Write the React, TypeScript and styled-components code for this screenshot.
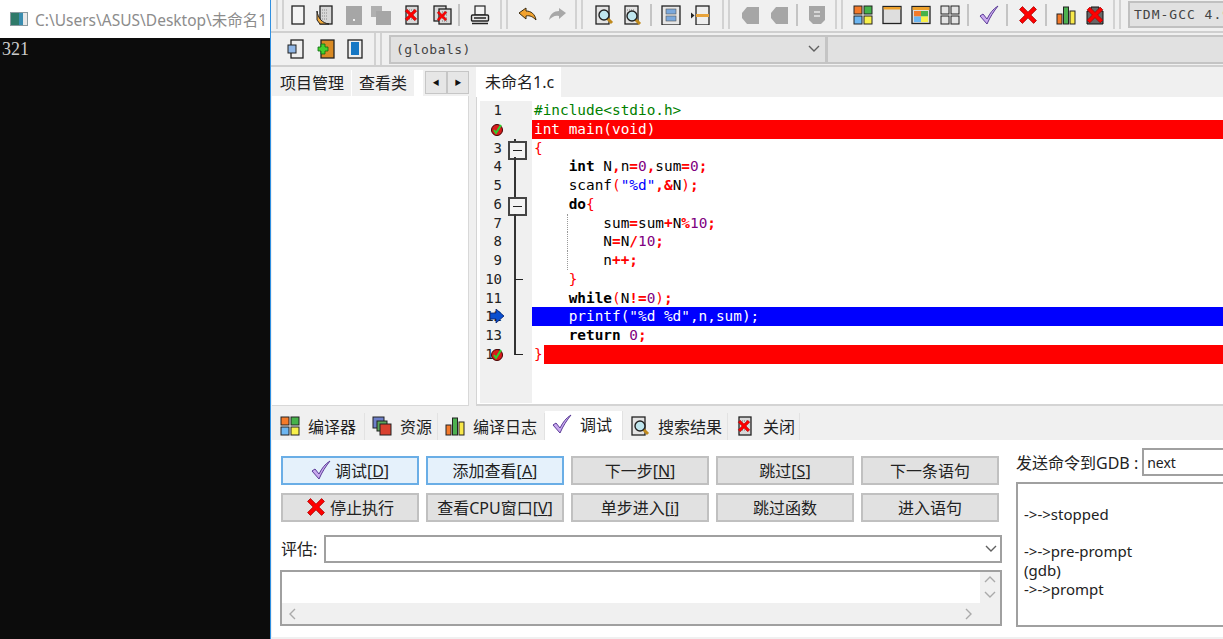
import React from 'react';
import styled, { createGlobalStyle, css } from 'styled-components';

const UI_FONT = `"Noto Sans", "Noto Sans CJK SC", sans-serif`;

const GlobalStyle = createGlobalStyle`
    html, body {
        margin: 0;
        padding: 0;
        background: #f0f0f0;
    }
    * {
        box-sizing: border-box;
    }
`;

/* ---------- icons ---------- */

const DOTS = 'M7 5h6M7 8h6M7 11h6M7 14h6';

function Doc({ x = 4, y = 1, w = 12, h = 18, fill = '#f4f4f4' }) {
    return <rect x={x} y={y} width={w} height={h} fill={fill} stroke="#222" strokeWidth="1.3" />;
}

function RedX({ x = 10, y = 10, s = 1 }: { x?: number; y?: number; s?: number }) {
    return (
        <g transform={`translate(${x} ${y}) scale(${s})`}>
            <path d="M-6 -4 -4 -6 0 -2 4 -6 6 -4 2 0 6 4 4 6 0 2 -4 6 -6 4 -2 0Z" fill="#f00" stroke="#a00" strokeWidth=".6" />
        </g>
    );
}

function Lens({ x = 12, y = 12 }) {
    return (
        <g>
            <path d={`M${x + 3} ${y + 3}l5 5`} stroke="#c08a1e" strokeWidth="3" />
            <circle cx={x} cy={y} r="5" fill="#bfe6ee" stroke="#222" strokeWidth="1.4" />
        </g>
    );
}

const ICONS: Record<string, React.ReactNode> = {
    new: <Doc />,
    open: (
        <>
            <Doc x={5} fill="#d8d8d8" />
            <path d={DOTS} stroke="#888" strokeDasharray="1 1" />
            <path d="M2 6C3 13 7 18 14 19H5L2 15Z" fill="#f0a93c" stroke="#222" />
        </>
    ),
    save: <path d="M2 1H18V20H2Z M9 14h2v2H9Z" fill="#a6a6a6" fillRule="evenodd" />,
    saveAll: (
        <>
            <path d="M0 1H11V12H0Z" fill="#b0b0b0" />
            <path d="M5 6H20V20H5Z" fill="#a6a6a6" />
        </>
    ),
    close: (
        <>
            <Doc fill="#d8d8d8" />
            <path d={DOTS} stroke="#777" strokeDasharray="1 1" />
            <RedX x={9} y={10} s={0.95} />
        </>
    ),
    closeAll: (
        <>
            <Doc x={2} y={1} w={12} h={15} fill="#d8d8d8" />
            <Doc x={7} y={4} w={12} h={15} fill="#d8d8d8" />
            <path d="M10 7h6M10 10h6M10 13h6M10 16h6" stroke="#777" strokeDasharray="1 1" />
            <RedX x={10} y={11} s={0.8} />
        </>
    ),
    print: (
        <>
            <rect x="5" y="1" width="10" height="9" fill="#f4f4f4" stroke="#222" strokeWidth="1.2" />
            <rect x="1.5" y="10" width="17" height="6" rx="1" fill="#e8e8e8" stroke="#222" strokeWidth="1.4" />
            <path d="M2 18.5H18M4 13h12" stroke="#222" strokeWidth="1.4" />
        </>
    ),
    undo: <path d="M1 8 8 3V6C13 6 17 9 18 15 15 12 12 10 8 11V14Z" fill="#f2a22d" stroke="#3a2b10" strokeWidth="1" />,
    redo: <path d="M19 8 12 3V6C7 6 3 9 2 15 5 12 8 10 12 11V14Z" fill="#a8a8a8" />,
    find: (
        <>
            <Doc x={2} y={1} w={13} h={18} fill="#e4e4e4" />
            <Lens x={10} y={10} />
        </>
    ),
    replace: (
        <>
            <Doc x={3} y={1} w={13} h={18} fill="#e4e4e4" />
            <path d="M5 5h8M5 8h8" stroke="#777" strokeDasharray="1 1" />
            <Lens x={10} y={11} />
        </>
    ),
    mode: (
        <>
            <rect x="1" y="1" width="18" height="19" fill="#e6e6e6" stroke="#222" strokeWidth="1.3" />
            <rect x="5" y="4" width="10" height="5" fill="#7aa8dc" stroke="#555" strokeWidth=".6" />
            <rect x="5" y="11" width="10" height="5" fill="#7aa8dc" stroke="#555" strokeWidth=".6" />
        </>
    ),
    insert: (
        <>
            <rect x="6" y="1" width="13" height="19" fill="#eee" stroke="#222" strokeWidth="1.3" />
            <rect x="6" y="9" width="13" height="3" fill="#e8a33a" />
            <path d="M1 7.5 4.5 10.5 1 13.5Z" fill="#222" />
        </>
    ),
    grayLeft: <path d="M6 2H18V19H6L1 13V8Z" fill="#a6a6a6" />,
    grayShield: (
        <>
            <path d="M2 1H18V15L14 19H6L2 15Z" fill="#a6a6a6" />
            <path d="M7 7h6M7 11h6" stroke="#e8e8e8" strokeWidth="1.4" />
        </>
    ),
    compile: (
        <>
            <rect x="1" y="1" width="8" height="8" fill="#f47a2a" stroke="#222" />
            <rect x="11" y="1" width="8" height="8" fill="#46b24a" stroke="#222" />
            <rect x="1" y="11" width="8" height="8" fill="#6cb6f2" stroke="#222" />
            <rect x="11" y="11" width="8" height="8" fill="#f8f04a" stroke="#222" />
        </>
    ),
    run: (
        <>
            <rect x="1" y="1.5" width="18" height="17" fill="#dedede" stroke="#222" strokeWidth="1.3" />
            <rect x="1.6" y="2" width="16.8" height="2.5" fill="#eda12c" />
        </>
    ),
    compileRun: (
        <>
            <rect x="1" y="1.5" width="18" height="17" fill="#ddd" stroke="#222" strokeWidth="1.3" />
            <rect x="1.6" y="2" width="16.8" height="3" fill="#eda12c" />
            <rect x="3" y="6" width="7" height="5.5" fill="#f47a2a" />
            <rect x="10" y="6" width="7" height="5.5" fill="#46b24a" />
            <rect x="3" y="11.5" width="7" height="5.5" fill="#6cb6f2" />
            <rect x="10" y="11.5" width="7" height="5.5" fill="#f8f04a" />
        </>
    ),
    rebuild: (
        <>
            <rect x="1" y="1" width="8" height="8" fill="#e4e4e4" stroke="#222" />
            <rect x="11" y="1" width="8" height="8" fill="#e4e4e4" stroke="#222" />
            <rect x="1" y="11" width="8" height="8" fill="#e4e4e4" stroke="#222" />
            <rect x="11" y="11" width="8" height="8" fill="#e4e4e4" stroke="#222" />
        </>
    ),
    check: <path d="M1 11 4 9 8 14C11 8 14 4 19 1 15 6 11 12 8 19Z" fill="#c9a8ee" stroke="#5a3c96" strokeWidth="1" />,
    stop: <RedX s={1.4} />,
    chart: (
        <>
            <rect x="1" y="9" width="5" height="10" fill="#f47a2a" stroke="#222" />
            <rect x="7.5" y="2" width="5" height="17" fill="#4cb050" stroke="#222" />
            <rect x="14" y="6" width="5" height="13" fill="#f8e84a" stroke="#222" />
        </>
    ),
    profile: (
        <>
            <path d="M2 6H6V2H14V6H18V19H2Z" fill="#666" stroke="#111" />
            <RedX s={1.3} />
        </>
    ),
    addFile: (
        <>
            <rect x="5" y="1" width="12" height="18" fill="#eee" stroke="#222" strokeWidth="1.3" />
            <rect x="2" y="6" width="8" height="8" fill="#8fb6e6" stroke="#222" />
        </>
    ),
    addProject: (
        <>
            <rect x="5" y="1" width="13" height="18" fill="#d98a24" stroke="#222" strokeWidth="1.3" />
            <path d="M6 6h3V3h4v3h3v4h-3v3H9v-3H6Z" transform="translate(-4 2)" fill="#43d12e" stroke="#0d6a12" strokeWidth=".8" />
        </>
    ),
    bookmark: (
        <>
            <rect x="3" y="1" width="14" height="18" fill="#eee" stroke="#222" strokeWidth="1.3" />
            <rect x="6" y="3" width="8" height="13" fill="#1577c4" />
        </>
    ),
    resource: (
        <>
            <rect x="1" y="1" width="11" height="11" fill="#6d7fc9" stroke="#222" />
            <rect x="5" y="5" width="10" height="10" fill="#5aa45a" stroke="#222" />
            <rect x="8" y="8" width="11" height="11" fill="#d9412f" stroke="#222" />
        </>
    ),
};

const IconBox = styled.svg<{ $size: number }>`
    width: ${({ $size }) => $size}px;
    height: ${({ $size }) => $size}px;
    flex: none;
    display: block;
`;

function Icon({ name, size = 20 }: { name: string; size?: number }) {
    return (
        <IconBox $size={size} viewBox="0 0 20 20">
            {ICONS[name]}
        </IconBox>
    );
}

/* ---------- layout ---------- */

const Page = styled.div`
    display: flex;
    width: 1223px;
    height: 639px;
    overflow: hidden;
    font-family: ${UI_FONT};
    font-size: 16px;
    color: #222;
`;

const Console = styled.section`
    width: 271px;
    flex: none;
    display: flex;
    flex-direction: column;
    border-right: 1px solid #2f8fe0;
    background: #0c0c0c;
`;

const ConsoleTitle = styled.div`
    height: 38px;
    flex: none;
    display: flex;
    align-items: center;
    gap: 7px;
    padding-left: 10px;
    background: #fff;
    color: #8c8c8c;
    font-size: 15.5px;
    white-space: nowrap;
    overflow: hidden;
`;

const ConsoleGlyph = styled.div`
    width: 18px;
    height: 14px;
    flex: none;
    border: 1px solid #8a9aa0;
    background: linear-gradient(90deg, #2f7a6a 0 50%, #3a8db0 50% 78%, #e8e8e8 78%);
`;

const ConsoleText = styled.div`
    padding: 0 2px;
    font-family: 'Liberation Serif', serif;
    font-size: 18px;
    line-height: 22px;
    color: #cccccc;
`;

const Ide = styled.main`
    flex: 1;
    min-width: 0;
    display: flex;
    flex-direction: column;
    background: #f0f0f0;
`;

const ToolRow = styled.div<{ $h: number; $padBottom?: number }>`
    height: ${({ $h }) => $h}px;
    flex: none;
    display: flex;
    align-items: center;
    padding: 0 0 ${({ $padBottom }) => $padBottom ?? 0}px 5px;
    border-bottom: 2px solid #cfcfcf;
    white-space: nowrap;
`;

const Tool = styled.div<{ $ml: number }>`
    width: 20px;
    margin-left: ${({ $ml }) => $ml}px;
    flex: none;
`;

const ToolSep = styled.div<{ $ml: number }>`
    width: 2px;
    height: 22px;
    margin-left: ${({ $ml }) => $ml}px;
    flex: none;
    background: #c4c4c4;
`;

const ToolHandle = styled.div<{ $ml: number }>`
    width: 8px;
    margin-left: ${({ $ml }) => $ml}px;
    flex: none;
    align-self: stretch;
    display: flex;
    justify-content: space-between;
    &::before,
    &::after {
        content: '';
        width: 2px;
        background: #d2d2d2;
    }
`;

const monoCombo = css`
    font-family: 'DejaVu Sans Mono', monospace;
    font-size: 13px;
    color: #444;
`;

const CompilerCombo = styled.div`
    flex: none;
    width: 120px;
    height: 27px;
    margin-left: 7px;
    padding-left: 4px;
    display: flex;
    align-items: center;
    background: #e1e1e1;
    border: 2px solid #c0c0c0;
    letter-spacing: 1px;
    overflow: hidden;
    ${monoCombo}
`;

const GlobalsCombo = styled.div`
    width: 438px;
    height: 29px;
    flex: none;
    margin-left: 7px;
    padding: 0 5px 0 5px;
    display: flex;
    align-items: center;
    justify-content: space-between;
    background: #e1e1e1;
    border: 2px solid #c4c4c4;
    letter-spacing: 0.5px;
    ${monoCombo}
`;

const EmptyCombo = styled.div`
    flex: 1;
    height: 29px;
    background: #e1e1e1;
    border: 2px solid #c4c4c4;
    border-left-width: 1px;
    border-right: none;
`;

const Workspace = styled.div`
    height: 339px;
    flex: none;
    display: flex;
    padding-left: 1px;
`;

const SidePanel = styled.aside`
    width: 197px;
    flex: none;
    display: flex;
    flex-direction: column;
`;

const SideTabs = styled.div`
    height: 29px;
    flex: none;
    display: flex;
    align-items: flex-end;
    padding-left: 1px;
`;

const SideTab = styled.div`
    height: 26px;
    padding: 0 7px 2px;
    display: flex;
    align-items: center;
    border-right: 1px solid #fff;
    white-space: nowrap;
`;

const TabGap = styled.div`
    width: 8px;
    height: 26px;
    flex: none;
    background: #fff;
`;

const ArrowPair = styled.div`
    display: flex;
    align-self: center;
    margin-left: 2px;
    margin-top: 1px;
`;

const ArrowButton = styled.div`
    width: 22px;
    height: 23px;
    display: flex;
    align-items: center;
    justify-content: center;
    background: #e6e6e6;
    border: 1px solid #c6c6c6;
    font-size: 7px;
    color: #111;
`;

const SideBody = styled.div`
    flex: 1;
    background: #fff;
    border-right: 1px solid #d8d8d8;
    border-bottom: 1px solid #d8d8d8;
`;

const EditorColumn = styled.div`
    flex: 1;
    min-width: 0;
    margin-left: 7px;
    display: flex;
    flex-direction: column;
`;

const EditorTabs = styled.div`
    height: 30px;
    flex: none;
    display: flex;
`;

const EditorTab = styled.div`
    width: 85px;
    display: flex;
    align-items: center;
    padding: 0 0 2px 9px;
    background: #fff;
    white-space: nowrap;
`;

const EditorFrame = styled.div`
    flex: 1;
    display: flex;
    padding: 4px 0 1px 3px;
    background: #fff;
    border-left: 1px solid #d4d4d4;
    border-bottom: 2px solid #d4d4d4;
`;

const Gutter = styled.div`
    width: 52px;
    flex: none;
    background: #f0f0f0;
`;

const GutterRow = styled.div`
    position: relative;
    height: 18.77px;
    display: flex;
    font-family: 'DejaVu Sans Mono', monospace;
    font-size: 14px;
    line-height: 18.77px;
`;

const LineNumber = styled.div`
    width: 22px;
    flex: none;
    text-align: right;
    color: #222;
`;

const foldLine = css`
    position: absolute;
    left: 6px;
    width: 2px;
    background: #333;
    content: '';
`;

const FoldCell = styled.div<{ $kind: string }>`
    position: relative;
    width: 16px;
    margin-left: 6px;
    flex: none;
    &::before {
        ${foldLine}
        display: ${({ $kind }) => ($kind ? 'block' : 'none')};
        top: 0;
        bottom: ${({ $kind }) => ($kind === 'end' ? '9px' : '0')};
    }
    &::after {
        content: '';
        position: absolute;
        ${({ $kind }) =>
            $kind === 'box'
                ? css`
                      left: 0;
                      top: 2px;
                      width: 15px;
                      height: 15px;
                      border: 2px solid #444;
                      background: linear-gradient(#222, #222) center / 9px 1px no-repeat #f4f4f4;
                  `
                : $kind === 'tick' || $kind === 'end'
                  ? css`
                        left: 7px;
                        top: 9px;
                        width: 8px;
                        height: 1px;
                        background: #222;
                    `
                  : ''}
    }
`;

const GutterMark = styled.div`
    position: absolute;
    left: 10px;
    top: 2px;
`;

const Code = styled.div`
    flex: 1;
    min-width: 0;
    font-family: 'DejaVu Sans Mono', monospace;
    font-size: 14.4px;
    line-height: 18.77px;
    white-space: pre;
`;

const CodeLine = styled.div<{ $bg?: string; $guide?: boolean }>`
    position: relative;
    height: 18.77px;
    padding-left: 2px;
    background: ${({ $bg }) => $bg ?? 'transparent'};
    ${({ $guide }) =>
        $guide &&
        css`
            &::before {
                content: '';
                position: absolute;
                left: 35px;
                top: 0;
                bottom: 0;
                border-left: 1px dotted #999;
            }
        `}
`;

const CloseBrace = styled.span`
    display: inline-block;
    height: 100%;
    margin-left: -2px;
    padding-left: 2px;
    width: 12px;
    background: #fff;
    color: #f00;
`;

const TOKEN_STYLE: Record<string, string> = {
    p: 'color: #008000;',
    k: 'color: #000; font-weight: 700;',
    s: 'color: #f00; font-weight: 700;',
    b: 'color: #f00;',
    n: 'color: #800080;',
    q: 'color: #0000ff;',
    i: 'color: #000;',
    w: 'color: #fff;',
};

const Token = styled.span<{ $kind: string }>`
    ${({ $kind }) => TOKEN_STYLE[$kind]}
`;

const BottomTabs = styled.div`
    height: 34px;
    flex: none;
    display: flex;
    align-items: flex-end;
    padding-left: 2px;
`;

const BottomTab = styled.div<{ $active?: boolean; $w: number }>`
    width: ${({ $w }) => $w}px;
    height: ${({ $active }) => ($active ? 29 : 27)}px;
    flex: none;
    display: flex;
    align-items: center;
    gap: 8px;
    padding: 0 0 ${({ $active }) => ($active ? 4 : 1)}px 7px;
    white-space: nowrap;
    border-right: 1px solid #e2e2e2;
    background: ${({ $active }) => ($active ? '#fff' : '#f0f0f0')};
`;

const DebugPanel = styled.div`
    height: 197px;
    flex: none;
    display: flex;
    gap: 14px;
    margin-left: 1px;
    padding: 8px 0 0 9px;
    background: #fff;
    overflow: hidden;
`;

const DebugMain = styled.div`
    width: 721px;
    flex: none;
    display: flex;
    flex-direction: column;
    padding-top: 8px;
`;

const ButtonGrid = styled.div`
    display: grid;
    grid-template-columns: repeat(5, 138px);
    grid-auto-rows: 29px;
    column-gap: 7px;
    row-gap: 8px;
`;

const PanelButton = styled.div<{ $focus?: boolean }>`
    display: flex;
    align-items: center;
    justify-content: center;
    gap: 4px;
    padding-bottom: 2px;
    background: ${({ $focus }) => ($focus ? '#e5f1fb' : '#e1e1e1')};
    border: 2px solid ${({ $focus }) => ($focus ? '#6aaee6' : '#c0c0c0')};
    white-space: nowrap;
`;

const EvalRow = styled.div`
    display: flex;
    align-items: center;
    margin-top: 13px;
    height: 28px;
`;

const EvalLabel = styled.div`
    width: 43px;
    flex: none;
    padding-bottom: 3px;
`;

const EvalCombo = styled.div`
    flex: 1;
    height: 28px;
    display: flex;
    align-items: center;
    justify-content: flex-end;
    padding-right: 3px;
    background: #fff;
    border: 2px solid #a0a0a0;
`;

const EvalMemo = styled.div`
    height: 56px;
    margin: 7px 0 0 -1px;
    display: grid;
    grid-template-columns: 1fr 20px;
    grid-template-rows: 1fr 21px;
    border: 2px solid #a0a0a0;
`;

const VerticalScroll = styled.div`
    display: flex;
    flex-direction: column;
    align-items: center;
    gap: 3px;
    padding-top: 2px;
    background: #f0f0f0;
`;

const HorizontalScroll = styled.div`
    grid-column: 1 / 3;
    display: flex;
    align-items: center;
    justify-content: space-between;
    padding: 0 26px 0 5px;
    background: #f0f0f0;
`;

const DebugSide = styled.div`
    flex: 1;
    min-width: 0;
    display: flex;
    flex-direction: column;
`;

const CommandRow = styled.div`
    height: 28px;
    display: flex;
    align-items: center;
    white-space: nowrap;
`;

const CommandInput = styled.div`
    flex: 1;
    height: 28px;
    margin-left: 4px;
    padding-left: 3px;
    display: flex;
    align-items: center;
    border: 2px solid #a0a0a0;
    border-right: none;
    font-size: 14px;
`;

const Output = styled.div`
    height: 145px;
    margin-top: 6px;
    padding: 2px 0 0 6px;
    border: 2px solid #a0a0a0;
    border-right: none;
    font-size: 15px;
    line-height: 18.77px;
    white-space: pre;
`;

/* ---------- data ---------- */

type Tok = [string, string];

const LINES: { toks: Tok[]; bg?: string; guide?: boolean; fold?: string; mark?: string; braceEnd?: boolean }[] = [
    { toks: [['p', '#include<stdio.h>']] },
    { toks: [['w', 'int main(void)']], bg: '#ff0000', mark: 'break' },
    { toks: [['b', '{']], fold: 'box' },
    { toks: [['i', '    '], ['k', 'int'], ['i', ' N'], ['s', ','], ['i', 'n'], ['s', '='], ['n', '0'], ['s', ','], ['i', 'sum'], ['s', '='], ['n', '0'], ['s', ';']], fold: 'line' },
    { toks: [['i', '    scanf'], ['b', '('], ['q', '"%d"'], ['s', ','], ['s', '&'], ['i', 'N'], ['b', ')'], ['s', ';']], fold: 'line' },
    { toks: [['i', '    '], ['k', 'do'], ['b', '{']], fold: 'box' },
    { toks: [['i', '        sum'], ['s', '='], ['i', 'sum'], ['s', '+'], ['i', 'N'], ['s', '%'], ['n', '10'], ['s', ';']], fold: 'line', guide: true },
    { toks: [['i', '        N'], ['s', '='], ['i', 'N'], ['s', '/'], ['n', '10'], ['s', ';']], fold: 'line', guide: true },
    { toks: [['i', '        n'], ['s', '++;']], fold: 'line', guide: true },
    { toks: [['i', '    '], ['b', '}']], fold: 'tick' },
    { toks: [['i', '    '], ['k', 'while'], ['b', '('], ['i', 'N'], ['s', '!='], ['n', '0'], ['b', ')'], ['s', ';']], fold: 'line' },
    { toks: [['w', '    printf("%d %d",n,sum);']], bg: '#0000ff', fold: 'line', mark: 'arrow' },
    { toks: [['i', '    '], ['k', 'return'], ['i', ' '], ['n', '0'], ['s', ';']], fold: 'line' },
    { toks: [], bg: '#ff0000', fold: 'end', mark: 'break', braceEnd: true },
];

const Marks: Record<string, React.ReactNode> = {
    break: (
        <svg width="14" height="14" viewBox="0 0 14 14">
            <circle cx="7" cy="8" r="5.5" fill="#d81c1c" stroke="#400" />
            <path d="M4 8l2 3 5-8" stroke="#2fd12f" strokeWidth="2" fill="none" />
        </svg>
    ),
    arrow: (
        <svg width="14" height="14" viewBox="0 0 14 14">
            <path d="M0 4H6V0L14 7 6 14V10H0Z" fill="#0a4fd0" stroke="#06206a" strokeWidth=".8" />
        </svg>
    ),
};

// icon name (or sep / handle) and the space left of it
const TOOLS_TOP: [string, number][] = [
    ['handle', 0],
    ['new', 4], ['open', 7], ['save', 9], ['saveAll', 7], ['close', 11], ['closeAll', 10],
    ['sep', 6],
    ['print', 10],
    ['handle', 10],
    ['undo', 10], ['redo', 9],
    ['handle', 8],
    ['find', 11], ['replace', 8],
    ['sep', 8],
    ['mode', 9], ['insert', 9],
    ['handle', 12],
    ['grayLeft', 11], ['grayLeft', 9],
    ['sep', 6],
    ['grayShield', 9],
    ['handle', 8],
    ['compile', 10], ['run', 9], ['compileRun', 9], ['rebuild', 9],
    ['sep', 7],
    ['check', 10],
    ['sep', 7],
    ['stop', 10],
    ['sep', 7],
    ['chart', 9], ['profile', 9],
    ['handle', 8],
];

const BUTTONS: React.ReactNode[] = [
    <PanelButton key="d" $focus><Icon name="check" /><span>调试[<u>D</u>]</span></PanelButton>,
    <PanelButton key="a" $focus><span>添加查看[<u>A</u>]</span></PanelButton>,
    <PanelButton key="n"><span>下一步[<u>N</u>]</span></PanelButton>,
    <PanelButton key="s"><span>跳过[<u>S</u>]</span></PanelButton>,
    <PanelButton key="ns">下一条语句</PanelButton>,
    <PanelButton key="x"><Icon name="stop" /><span>停止执行</span></PanelButton>,
    <PanelButton key="v"><span>查看CPU窗口[<u>V</u>]</span></PanelButton>,
    <PanelButton key="i"><span>单步进入[<u>i</u>]</span></PanelButton>,
    <PanelButton key="f">跳过函数</PanelButton>,
    <PanelButton key="e">进入语句</PanelButton>,
];

const BOTTOM_TABS: { icon: string; label: string; w: number; active?: boolean }[] = [
    { icon: 'compile', label: '编译器', w: 92 },
    { icon: 'resource', label: '资源', w: 73 },
    { icon: 'chart', label: '编译日志', w: 107 },
    { icon: 'check', label: '调试', w: 78, active: true },
    { icon: 'find', label: '搜索结果', w: 105 },
    { icon: 'close', label: '关闭', w: 72 },
];

function Chevron({ dir, color = '#606060' }: { dir: 'down' | 'up' | 'left' | 'right'; color?: string }) {
    const paths = { down: 'M1 3l5 5 5-5', up: 'M1 8l5-5 5 5', left: 'M8 1 3 6l5 5', right: 'M4 1l5 5-5 5' };
    return (
        <svg width="12" height="12" viewBox="0 0 12 12">
            <path d={paths[dir]} fill="none" stroke={color} strokeWidth="1.4" />
        </svg>
    );
}

function TopToolbar() {
    return (
        <ToolRow $h={33} $padBottom={2}>
            {TOOLS_TOP.map(([name, ml], i) => {
                if (name === 'sep') return <ToolSep key={i} $ml={ml} />;
                if (name === 'handle') return <ToolHandle key={i} $ml={ml} />;
                return (
                    <Tool key={i} $ml={ml}>
                        <Icon name={name} />
                    </Tool>
                );
            })}
            <CompilerCombo>TDM-GCC 4.9.2</CompilerCombo>
        </ToolRow>
    );
}

function SecondToolbar() {
    return (
        <ToolRow $h={34}>
            <Tool $ml={10}><Icon name="addFile" /></Tool>
            <Tool $ml={10}><Icon name="addProject" /></Tool>
            <Tool $ml={9}><Icon name="bookmark" /></Tool>
            <ToolHandle $ml={9} />
            <GlobalsCombo>
                (globals)
                <Chevron dir="down" />
            </GlobalsCombo>
            <EmptyCombo />
        </ToolRow>
    );
}

function Editor() {
    return (
        <EditorFrame>
            <Gutter>
                {LINES.map((line, i) => (
                    <GutterRow key={i}>
                        <LineNumber>{line.mark === 'break' && i === 1 ? '' : i + 1}</LineNumber>
                        <FoldCell $kind={line.fold ?? ''} />
                        {line.mark && <GutterMark>{Marks[line.mark]}</GutterMark>}
                    </GutterRow>
                ))}
            </Gutter>
            <Code>
                {LINES.map((line, i) => (
                    <CodeLine key={i} $bg={line.bg} $guide={line.guide}>
                        {line.braceEnd && <CloseBrace>{'}'}</CloseBrace>}
                        {line.toks.map((t, j) => (
                            <Token key={j} $kind={t[0]}>
                                {t[1]}
                            </Token>
                        ))}
                    </CodeLine>
                ))}
            </Code>
        </EditorFrame>
    );
}

function DebugArea() {
    return (
        <DebugPanel>
            <DebugMain>
                <ButtonGrid>{BUTTONS}</ButtonGrid>
                <EvalRow>
                    <EvalLabel>评估:</EvalLabel>
                    <EvalCombo>
                        <Chevron dir="down" />
                    </EvalCombo>
                </EvalRow>
                <EvalMemo>
                    <div />
                    <VerticalScroll>
                        <Chevron dir="up" color="#aaa" />
                        <Chevron dir="down" color="#aaa" />
                    </VerticalScroll>
                    <HorizontalScroll>
                        <Chevron dir="left" color="#aaa" />
                        <Chevron dir="right" color="#aaa" />
                    </HorizontalScroll>
                </EvalMemo>
            </DebugMain>
            <DebugSide>
                <CommandRow>
                    发送命令到GDB :<CommandInput>next</CommandInput>
                </CommandRow>
                <Output>{'\n->->stopped\n\n->->pre-prompt\n(gdb)\n->->prompt'}</Output>
            </DebugSide>
        </DebugPanel>
    );
}

export default function App() {
    return (
        <Page>
            <GlobalStyle />
            <Console>
                <ConsoleTitle>
                    <ConsoleGlyph />
                    C:\Users\ASUS\Desktop\未命名1
                </ConsoleTitle>
                <ConsoleText>321</ConsoleText>
            </Console>
            <Ide>
                <TopToolbar />
                <SecondToolbar />
                <Workspace>
                    <SidePanel>
                        <SideTabs>
                            <SideTab>项目管理</SideTab>
                            <SideTab>查看类</SideTab>
                            <TabGap />
                            <ArrowPair>
                                <ArrowButton>◀</ArrowButton>
                                <ArrowButton>▶</ArrowButton>
                            </ArrowPair>
                        </SideTabs>
                        <SideBody />
                    </SidePanel>
                    <EditorColumn>
                        <EditorTabs>
                            <EditorTab>未命名1.c</EditorTab>
                        </EditorTabs>
                        <Editor />
                    </EditorColumn>
                </Workspace>
                <BottomTabs>
                    {BOTTOM_TABS.map((t) => (
                        <BottomTab key={t.label} $w={t.w} $active={t.active}>
                            <Icon name={t.icon} />
                            {t.label}
                        </BottomTab>
                    ))}
                </BottomTabs>
                <DebugArea />
            </Ide>
        </Page>
    );
}
